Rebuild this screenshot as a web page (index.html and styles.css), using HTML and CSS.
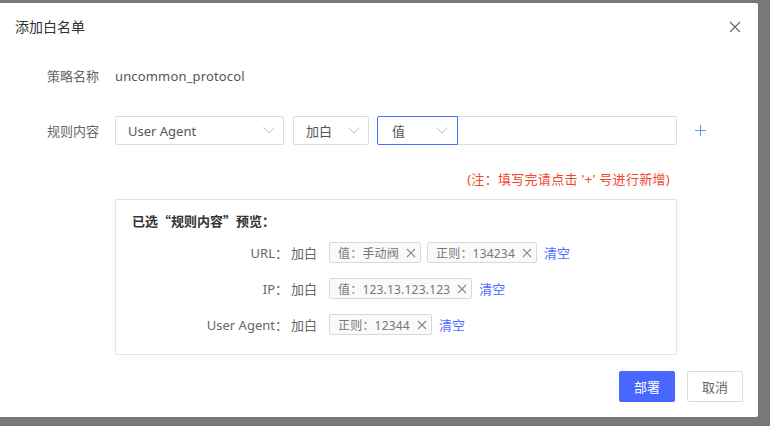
FILE: index.html
```html
<!DOCTYPE html>
<html lang="zh">
<head>
<meta charset="utf-8">
<title>添加白名单</title>
<link rel="stylesheet" href="styles.css">
</head>
<body>
<div class="dialog">
  <div class="header">
    <span class="title">添加白名单</span>
    <span class="close">
      <svg width="12" height="12" viewBox="0 0 12 12"><path d="M1 1L11 11M11 1L1 11" stroke="#666" stroke-width="1.1" fill="none"/></svg>
    </span>
  </div>
  <div class="body">
    <div class="row r1">
      <div class="label">策略名称</div>
      <div class="value">uncommon_protocol</div>
    </div>
    <div class="row r2">
      <div class="label">规则内容</div>
      <div class="controls">
        <div class="select s1"><span>User Agent</span><svg class="chev" width="12" height="7" viewBox="0 0 12 7"><path d="M0.5 0.5L6 6L11.5 0.5" stroke="#bfbfbf" stroke-width="1" fill="none"/></svg></div>
        <div class="select s2"><span>加白</span><svg class="chev" width="12" height="7" viewBox="0 0 12 7"><path d="M0.5 0.5L6 6L11.5 0.5" stroke="#bfbfbf" stroke-width="1" fill="none"/></svg></div>
        <div class="group">
          <div class="select s3"><span>值</span><svg class="chev" width="12" height="7" viewBox="0 0 12 7"><path d="M0.5 0.5L6 6L11.5 0.5" stroke="#bfbfbf" stroke-width="1" fill="none"/></svg></div>
          <div class="input"></div>
        </div>
        <span class="plus"><svg width="11" height="11" viewBox="0 0 11 11"><path d="M5.5 0V11M0 5.5H11" stroke="#6f8cff" stroke-width="1.1" fill="none"/></svg></span>
      </div>
    </div>
    <div class="note">(注：填写完请点击 '+' 号进行新增)</div>
    <div class="preview">
      <div class="ptitle">已选“规则内容”预览：</div>
      <div class="prow">
        <div class="plabel">URL：</div>
        <div class="pact">加白</div>
        <div class="tags">
          <span class="tag">值：手动阀<svg class="x" width="10" height="10" viewBox="0 0 10 10"><path d="M1 1L9 9M9 1L1 9" stroke="#888" stroke-width="1.1" fill="none"/></svg></span>
          <span class="tag">正则：134234<svg class="x" width="10" height="10" viewBox="0 0 10 10"><path d="M1 1L9 9M9 1L1 9" stroke="#888" stroke-width="1.1" fill="none"/></svg></span>
          <span class="clear">清空</span>
        </div>
      </div>
      <div class="prow">
        <div class="plabel">IP：</div>
        <div class="pact">加白</div>
        <div class="tags">
          <span class="tag">值：123.13.123.123<svg class="x" width="10" height="10" viewBox="0 0 10 10"><path d="M1 1L9 9M9 1L1 9" stroke="#888" stroke-width="1.1" fill="none"/></svg></span>
          <span class="clear">清空</span>
        </div>
      </div>
      <div class="prow">
        <div class="plabel">User Agent：</div>
        <div class="pact">加白</div>
        <div class="tags">
          <span class="tag">正则：12344<svg class="x" width="10" height="10" viewBox="0 0 10 10"><path d="M1 1L9 9M9 1L1 9" stroke="#888" stroke-width="1.1" fill="none"/></svg></span>
          <span class="clear">清空</span>
        </div>
      </div>
    </div>
  </div>
  <div class="footer">
    <button class="btn primary">部署</button>
    <button class="btn">取消</button>
  </div>
</div>
</body>
</html>
```
FILE: styles.css
```css
* { box-sizing: border-box; }
html, body { margin: 0; padding: 0; }
body {
  background: #787878;
  width: 770px;
  height: 426px;
  overflow: hidden;
  font-family: "Noto Sans", "Noto Sans CJK SC", sans-serif;
  font-size: 13px;
  color: #666;
}
.dialog {
  margin-top: 3px;
  width: 758px;
  height: 414px;
  background: #fff;
  border-radius: 0 2px 2px 0;
  display: flex;
  flex-direction: column;
}
.header {
  display: flex;
  align-items: center;
  justify-content: space-between;
  padding: 14px 17px 14px 15px;
  line-height: 20px;
}
.title { font-size: 14px; color: #333; }
.close { display: flex; width: 12px; height: 12px; }
.body { padding-left: 47px; }
.row { display: flex; align-items: center; height: 29px; }
.r1 { margin-top: 10px; }
.r2 { margin-top: 26px; }
.label { width: 68px; color: #666; }
.value { color: #555; letter-spacing: 0.15px; }
.controls { display: flex; align-items: center; }
.select {
  height: 29px;
  border: 1px solid #dcdcdc;
  border-radius: 2px;
  display: flex;
  align-items: center;
  justify-content: space-between;
  color: #555;
}
.s1 { width: 169px; padding: 0 8px 0 12px; }
.s2 { width: 76px; padding: 0 8px 0 12px; margin-left: 9px; }
.group { display: flex; margin-left: 8px; }
.s3 { width: 81px; padding: 0 9px 0 14px; border: 1px solid #4a6cff; border-radius: 2px 0 0 2px; }
.input { width: 219px; height: 29px; border: 1px solid #dcdcdc; border-left: none; border-radius: 0 2px 2px 0; }
.plus { display: flex; margin-left: 18px; }
.note {
  margin-top: 24px;
  line-height: 20px;
  color: #f5462d;
  width: 623px;
  text-align: right;
  letter-spacing: 0.3px;
}
.preview {
  margin-top: 10px;
  margin-left: 68px;
  width: 562px;
  height: 156px;
  border: 1px solid #e4e4e4;
  padding: 11px 16px 0;
}
.ptitle {
  font-family: "Noto Sans CJK SC", sans-serif;
  font-weight: bold;
  color: #333;
  line-height: 20px;
}
.prow { display: flex; align-items: center; height: 21px; margin-top: 15px; }
.ptitle + .prow { margin-top: 11px; }
.plabel { width: 156px; flex-shrink: 0; text-align: right; color: #666; }
.pact { margin-left: 3px; width: 26px; flex-shrink: 0; }
.tags { display: flex; align-items: center; margin-left: 12px; flex-shrink: 0; white-space: nowrap; }
.tag {
  display: flex;
  align-items: center;
  flex-shrink: 0;
  height: 21px;
  padding: 0 4px 0 8px;
  border: 1px solid #d9d9d9;
  border-radius: 2px;
  background: #fafafa;
  font-size: 12px;
  color: #777;
  margin-right: 6px;
  letter-spacing: 0.2px;
}
.x { margin-left: 7px; }
.clear { color: #4a6cff; margin-left: 1px; }
.footer {
  display: flex;
  justify-content: flex-end;
  gap: 12px;
  padding: 16px 15px 15px;
  margin-top: auto;
}
.btn {
  width: 56px;
  height: 31px;
  border: 1px solid #dcdcdc;
  border-radius: 2px;
  background: #fff;
  color: #666;
  font-family: inherit;
  font-size: 13px;
  padding: 0;
}
.btn.primary { background: #4767ff; border-color: #4767ff; color: #fff; }
```
